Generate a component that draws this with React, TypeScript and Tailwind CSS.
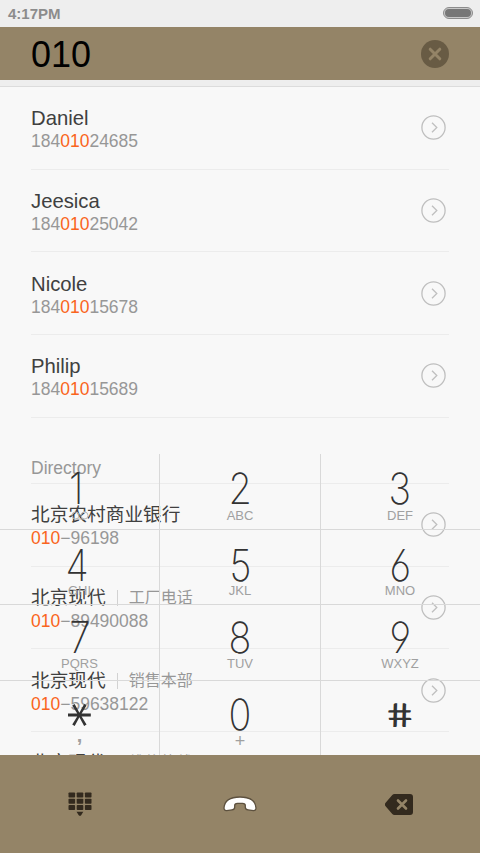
import React from "react";
import { clsx } from "clsx";

interface Contact {
  name: string;
  tag?: string;
  number: string;
}

const QUERY = "010";

const contacts: Contact[] = [
  { name: "Daniel", number: "18401024685" },
  { name: "Jeesica", number: "18401025042" },
  { name: "Nicole", number: "18401015678" },
  { name: "Philip", number: "18401015689" },
];

const directory: Contact[] = [
  { name: "北京农村商业银行", number: "010-96198" },
  { name: "北京现代", tag: "工厂电话", number: "010-89490088" },
  { name: "北京现代", tag: "销售本部", number: "010-59638122" },
  { name: "北京现代", tag: "维修热线", number: "010-59638000" },
];

const keys = [
  ["1", "voicemail"],
  ["2", "ABC"],
  ["3", "DEF"],
  ["4", "GHI"],
  ["5", "JKL"],
  ["6", "MNO"],
  ["7", "PQRS"],
  ["8", "TUV"],
  ["9", "WXYZ"],
  ["*", ","],
  ["0", "+"],
  ["#", ""],
];

const rowPadding = ["pt-[13px]", "pt-[14px]", "pt-[11px]", "pt-[12px]"];
const captionOffset = ["-mt-px", "-mt-[3px]", "-mt-[2px]", "-mt-px"];

const StatusBar = () => (
  <div className="flex h-[26.5px] shrink-0 items-center justify-between bg-[#eeeeee] pl-2 pr-[7px]">
    <span className="text-[15px] leading-none font-bold text-[#8c8c8c]">4:17PM</span>
    <div className="h-[12px] w-[30px] rounded-full border border-[#8c8c8c] bg-[#c8c8c8] p-px">
      <div className="h-full w-full rounded-full bg-[#777777]" />
    </div>
  </div>
);

const SearchBar = () => (
  <div className="flex h-[53.5px] shrink-0 items-center justify-between bg-[#948467] px-[31px]">
    <span className="text-[36px] leading-none text-black pt-[4px]">{QUERY}</span>
    <svg width="28" height="28" viewBox="0 0 28 28" className="mt-[1px]">
      <circle cx="14" cy="14" r="14" fill="#685b44" />
      <path d="M9.2 9.2l9.6 9.6M18.8 9.2l-9.6 9.6" stroke="#948467" strokeWidth="3" strokeLinecap="round" />
    </svg>
  </div>
);

const HighlightedNumber = ({ number }: { number: string }) => {
  const at = number.indexOf(QUERY);
  return (
    <div className="text-[17.5px] leading-[20px] text-[#979797]">
      {number.slice(0, at)}
      <span className="text-[#fa6420]">{QUERY}</span>
      {number.slice(at + QUERY.length).replace("-", "−")}
    </div>
  );
};

const ContactRow = ({ contact, cjk }: { contact: Contact; cjk?: boolean }) => (
  <div className="flex h-[82.67px] shrink-0 items-center justify-between border-b border-[#ececec] pr-[3px]">
    <div className="pt-[1px]">
      <div
        className={clsx(
          "flex items-center leading-[26px] text-[#404040]",
          cjk ? "text-[18.7px]" : "text-[20.3px]"
        )}
      >
        {contact.name}
        {contact.tag && (
          <span className="ml-[11px] flex items-center text-[16px] text-[#979797]">
            <span className="mr-[11px] h-[16px] w-px bg-[#d2d2d2]" />
            {contact.tag}
          </span>
        )}
      </div>
      <HighlightedNumber number={contact.number} />
    </div>
    <svg width="25" height="25" viewBox="0 0 25 25" fill="none" stroke="#bfbfbf">
      <circle cx="12.5" cy="12.5" r="11.6" strokeWidth="1.3" />
      <path d="M11 7.7l4.8 4.8-4.8 4.8" strokeWidth="1.3" />
    </svg>
  </div>
);

const Results = () => (
  <div className="flex h-full flex-col overflow-hidden px-[31px]">
    {contacts.map((c) => (
      <ContactRow key={c.name} contact={c} />
    ))}
    <div className="flex h-[66.3px] shrink-0 items-end border-b border-[#ececec] pb-[4px] text-[17.5px] leading-[22px] text-[#979797]">
      Directory
    </div>
    {directory.map((c) => (
      <ContactRow key={c.number} contact={c} cjk />
    ))}
  </div>
);

const KeySymbol = ({ symbol }: { symbol: string }) => {
  if (symbol === "*") {
    return (
      <span className="flex h-[42px] -translate-x-[9px] -translate-y-px rotate-90 items-center pl-1 font-['DejaVu_Sans'] text-[50px] leading-none text-[#333]">
        *
      </span>
    );
  }
  if (symbol === "#") {
    return (
      <span className="flex h-[42px] scale-x-[1.38] skew-x-[10deg] items-center font-[Lato] text-[33px] leading-none text-[#333]">
        #
      </span>
    );
  }
  return (
    <span
      className={clsx(
        "flex h-[42px] scale-x-[0.88] items-center font-[Inter] text-[43px] font-[250] leading-none text-[#333] [font-feature-settings:'cv03','cv04']",
        symbol === "1" && "-translate-x-[3px]",
        symbol === "4" && "-translate-x-[2px]"
      )}
    >
      {symbol}
    </span>
  );
};

const KeyCaption = ({ caption }: { caption: string }) => {
  if (caption === "voicemail") {
    return (
      <svg width="18" height="9" viewBox="0 0 18 9" fill="none" stroke="#b8b8b8">
        <circle cx="4.5" cy="4.5" r="3.5" />
        <circle cx="13.5" cy="4.5" r="3.5" />
        <path d="M4.5 8h9" />
      </svg>
    );
  }
  if (caption === ",") return <span className="-mt-3 text-[20px] font-bold">,</span>;
  if (caption === "+") return <span className="text-[18px]">+</span>;
  return <span className="text-[13px]">{caption}</span>;
};

const Keypad = () => (
  <div className="absolute inset-x-0 bottom-0 grid h-[301px] grid-cols-[160px_161px_1fr] grid-rows-[76px_75px_76px_74px]">
    {keys.map(([symbol, caption], i) => (
      <div
        key={symbol}
        className={clsx(
          "flex flex-col items-center border-[#d9d9d9]",
          i % 3 < 2 && "border-r",
          i % 3 === 2 && "pr-px",
          i < 9 && "border-b",
          rowPadding[Math.floor(i / 3)]
        )}
      >
        <KeySymbol symbol={symbol} />
        <span
          className={clsx(
            "flex h-[14px] items-center leading-none text-[#a0a0a0]",
            captionOffset[Math.floor(i / 3)]
          )}
        >
          <KeyCaption caption={caption} />
        </span>
      </div>
    ))}
  </div>
);

const ActionBar = () => (
  <div className="grid h-[98px] grid-cols-3 place-items-center bg-[#948467]">
    <svg width="24" height="24" viewBox="0 0 24 24" fill="#332a1e">
      {[0.5, 6.8, 13.1].map((y) =>
        [0.5, 8.7, 16.9].map((x) => <rect key={`${x}-${y}`} x={x} y={y} width="6.6" height="5" rx="0.8" />)
      )}
      <path d="M8.5 19.7h6.8l-2 3.3a1.5 1.5 0 0 1-2.700 0z" />
    </svg>
    <svg width="34" height="16" viewBox="0 0 34 16">
      <path
        d="M1 12C1.5 4.5 8 1 17 1s15.5 3.5 16 11c0 1.7-1 2.7-2.5 2.6l-5.5-.8c-1.7-.2-2.700-1-2.700-2.600V9.500c0-1.500-1.300-2.200-2.800-2.200h-5c-1.500 0-2.800.7-2.800 2.200v1.700c0 1.600-1 2.400-2.700 2.600l-5.500.8C2 14.700 1 13.700 1 12z"
        fill="#fff"
        stroke="#5d513f"
        strokeWidth="1.3"
      />
    </svg>
    <svg width="28" height="21" viewBox="0 0 28 21" className="mr-[2px]">
      <path d="M9.5 0H25a3 3 0 0 1 3 3v15a3 3 0 0 1-3 3H9.5a3 3 0 0 1-2.200-1L.6 12.200a2.500 2.500 0 0 1 0-3.400L7.300 1A3 3 0 0 1 9.500 0z" fill="#332a1e" />
      <path d="M13 6.500l8 8M21 6.500l-8 8" stroke="#948467" strokeWidth="2.6" strokeLinecap="round" />
    </svg>
  </div>
);

const App: React.FC = () => (
  <div className="flex h-[853px] w-[480px] flex-col overflow-hidden bg-[#f8f8f8] font-['Liberation_Sans','Noto_Sans_CJK_SC',sans-serif]">
    <StatusBar />
    <SearchBar />
    <div className="h-[7px] shrink-0 border-b border-[#dcdcdc] bg-[#eeeeee]" />
    <div className="relative h-[668px] shrink-0">
      <Results />
      <Keypad />
    </div>
    <ActionBar />
  </div>
);

export default App;
